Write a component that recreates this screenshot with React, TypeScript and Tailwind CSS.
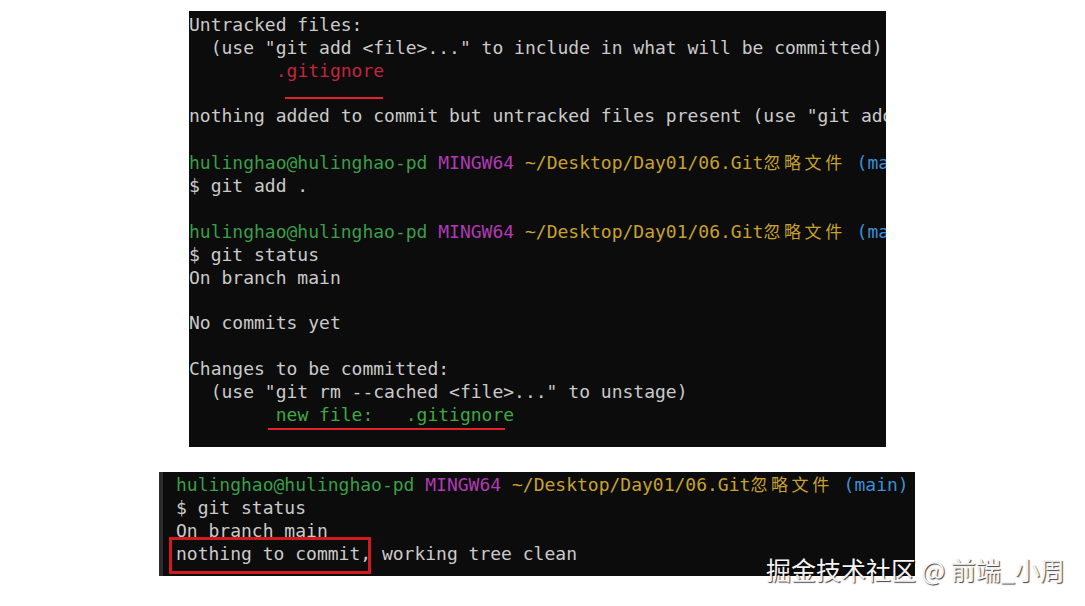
type Seg = { text: string; color?: string; cjk?: boolean };
type Line = Seg[];

const prompt = (): Line => [
  { text: "hulinghao@hulinghao-pd ", color: "text-[#3a9f48]" },
  { text: "MINGW64 ", color: "text-[#b03ab4]" },
  { text: "~/Desktop/Day01/06.Git", color: "text-[#c7a22c]" },
  { text: "忽略文件", color: "text-[#c7a22c]", cjk: true },
  { text: " (main)", color: "text-[#3b8fd6]" },
];

const topLines: Line[] = [
  [{ text: "Untracked files:" }],
  [{ text: '  (use "git add <file>..." to include in what will be committed)' }],
  [{ text: "        " }, { text: ".gitignore", color: "text-[#c4243c]" }],
  [],
  [{ text: 'nothing added to commit but untracked files present (use "git add" to track)' }],
  [],
  prompt(),
  [{ text: "$ git add ." }],
  [],
  prompt(),
  [{ text: "$ git status" }],
  [{ text: "On branch main" }],
  [],
  [{ text: "No commits yet" }],
  [],
  [{ text: "Changes to be committed:" }],
  [{ text: '  (use "git rm --cached <file>..." to unstage)' }],
  [{ text: "        " }, { text: "new file:   .gitignore", color: "text-[#3fa843]" }],
];

const bottomLines: Line[] = [
  prompt(),
  [{ text: "$ git status" }],
  [{ text: "On branch main" }],
  [{ text: "nothing to commit, working tree clean" }],
];

function TermLine({ line }: { line: Line }) {
  return (
    <div className="whitespace-pre">
      {line.length === 0 ? " " : null}
      {line.map((seg, i) => (
        <span
          key={i}
          className={`${seg.color ?? ""} ${seg.cjk ? "tracking-[3.6px] font-['Noto_Sans_CJK_SC',sans-serif] text-[17px]" : ""}`}
        >
          {seg.text}
        </span>
      ))}
    </div>
  );
}

export default function App() {
  return (
    <div className="relative h-[606px] w-[1085px] overflow-hidden bg-white">
      <div className="flex flex-col pt-[11px]">
        <section className="relative ml-[189px] h-[436px] w-[697px] overflow-hidden bg-[#0c0c0c] pt-[3px] font-['DejaVu_Sans_Mono','Liberation_Mono',monospace] text-[18px] leading-[22.8px] text-[#cacaca]">
          {topLines.map((line, i) => (
            <TermLine key={i} line={line} />
          ))}
          <div className="absolute left-[96px] top-[86px] h-[2px] w-[98px] bg-[#e3232b]" />
          <div className="absolute left-[79px] top-[417px] h-[2px] w-[237px] bg-[#e3232b]" />
        </section>

        <section className="relative ml-[159px] mt-[25px] h-[104px] w-[756px] overflow-hidden border-l-[4px] border-[#2c2c2c] bg-[#0c0c0c] pl-[13px] font-['DejaVu_Sans_Mono','Liberation_Mono',monospace] text-[18px] leading-[23px] text-[#cacaca]">
          {bottomLines.map((line, i) => (
            <TermLine key={i} line={line} />
          ))}
          <div className="absolute left-[6px] top-[65px] h-[37px] w-[202px] border-[3px] border-[#d21a1e]" />
        </section>
      </div>

      <div className="absolute left-[766px] top-[557px] font-['Noto_Sans_CJK_SC',sans-serif] text-[25px] leading-none text-[#f4f4f4] [text-shadow:1px_1px_1px_rgba(0,0,0,0.75)]">
        掘金技术社区 @ 前端_小周
      </div>
    </div>
  );
}
